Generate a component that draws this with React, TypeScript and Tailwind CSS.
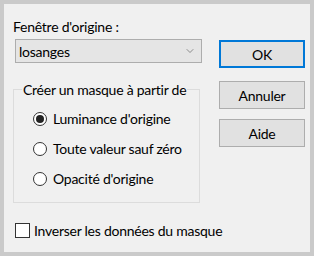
import { ChevronDown } from 'lucide-react';

const radios = [
  { label: "Luminance d'origine", checked: true },
  { label: 'Toute valeur sauf zéro', checked: false },
  { label: "Opacité d'origine", checked: false },
];

export default function App() {
  return (
    <div className="w-[314px] h-[256px] bg-[#cacaca] p-[4px] text-[14px] tracking-[-0.25px] text-black whitespace-nowrap font-['Lato',sans-serif]">
      <div className="w-[306px] h-[248px] bg-[#f0f0f0] flex">

        {/* Left column */}
        <div className="ml-[9px] w-[189px] flex flex-col">
          <div className="mt-[13px] h-[19px] leading-[19px]">Fenêtre d'origine :</div>

          {/* Dropdown */}
          <div className="mt-[3px] ml-[2px] w-[187px] h-[24px] bg-[#e5e5e5] border border-[#adadad] flex items-center justify-between pl-[3px] pr-[5px]">
            <span className="leading-[19px]">losanges</span>
            <ChevronDown className="w-[12px] h-[12px] text-[#555]" strokeWidth={1.25} />
          </div>

          {/* Group box */}
          <fieldset className="mt-[17px] w-[187px] h-[123px] border border-[#dcdcdc] px-[8px]">
            <legend className="px-[1px] leading-[19px]">Créer un masque à partir de</legend>
            <div className="flex flex-col gap-[11px] pl-[11px] pt-[10px]">
              {radios.map((r) => (
                <div key={r.label} className="flex items-center gap-[6px] h-[19px]">
                  <span className="shrink-0 w-[14px] h-[14px] rounded-full border border-[#333] bg-white flex items-center justify-center">
                    {r.checked && <span className="w-[8px] h-[8px] rounded-full bg-[#222]" />}
                  </span>
                  <span className="leading-[19px]">{r.label}</span>
                </div>
              ))}
            </div>
          </fieldset>

          {/* Checkbox */}
          <div className="mt-[18px] ml-[2px] flex items-center gap-[4px]">
            <span className="shrink-0 w-[15px] h-[15px] border border-[#333] bg-white" />
            <span className="leading-[19px]">Inverser les données du masque</span>
          </div>
        </div>

        {/* Right column */}
        <div className="ml-[17px] flex flex-col pt-[36px]">
          <button className="w-[86px] h-[28px] bg-[#e1e1e1] border-2 border-[#0078d7] leading-[19px]">OK</button>
          <button className="mt-[13px] w-[86px] h-[28px] bg-[#e1e1e1] border border-[#adadad] leading-[19px]">Annuler</button>
          <button className="mt-[10px] w-[86px] h-[28px] bg-[#e1e1e1] border border-[#adadad] leading-[19px]">Aide</button>
        </div>
      </div>
    </div>
  );
}
